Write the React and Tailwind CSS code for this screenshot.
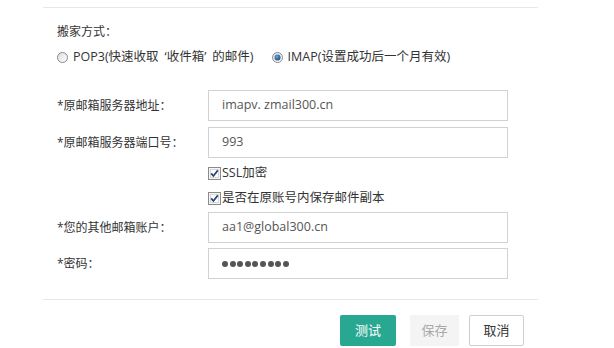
import React from 'react'

const font = { fontFamily: '"Open Sans", "Noto Sans CJK SC", sans-serif' }

function Radio({ checked }) {
  return (
    <svg width="11" height="11" viewBox="0 0 11 11" className="shrink-0">
      <defs>
        <linearGradient id={checked ? 'rg1' : 'rg0'} x1="0" y1="0" x2="1" y2="1">
          <stop offset="0" stopColor="#dcdcdc" />
          <stop offset="1" stopColor="#ffffff" />
        </linearGradient>
        <radialGradient id="rdot" cx="0.4" cy="0.35" r="0.75">
          <stop offset="0" stopColor="#6aa6dc" />
          <stop offset="1" stopColor="#173f73" />
        </radialGradient>
      </defs>
      <circle cx="5.5" cy="5.5" r="5" fill={`url(#${checked ? 'rg1' : 'rg0'})`} stroke="#8a8a8a" strokeWidth="1" />
      {checked && <circle cx="5.5" cy="5.5" r="3" fill="url(#rdot)" />}
    </svg>
  )
}

function Check() {
  return (
    <svg width="13" height="13" viewBox="0 0 13 13" className="shrink-0">
      <rect x="0.5" y="0.5" width="12" height="12" fill="#f6f6f6" stroke="#8a8a8a" />
      <rect x="2.5" y="2.5" width="8" height="8" fill="#ffffff" stroke="#d6d6d6" />
      <path d="M3.2 6.4 L5.4 9 L9.8 3.4" fill="none" stroke="#24447a" strokeWidth="1.7" />
    </svg>
  )
}

function Field({ label, children }) {
  return (
    <div className="flex items-center">
      <div className="w-[151px] text-[12px] text-[#333]">{label}</div>
      <div className="w-[300px] h-[31px] border border-[#d2d2d2] flex items-center pl-[13px] text-[12.5px] text-[#555]">
        {children}
      </div>
    </div>
  )
}

export default function App() {
  return (
    <div className="w-[614px] h-[348px] bg-white overflow-hidden pt-[7px]" style={font}>
      <div className="ml-[43px] w-[495px] border-t border-[#e8e8e8]">
        <div className="pl-[14px]">
          <div className="mt-[16px] h-[16px] leading-[16px] text-[12px] text-[#333]">搬家方式：</div>
          <div className="mt-[9px] h-[16px] flex items-center text-[12.5px] text-[#333]">
            <Radio />
            <span className="ml-[5px]">POP3(快速收取<span className="ml-[6px]">‘收件箱’</span><span className="ml-[6px]">的邮件)</span></span>
            <span className="ml-[18px]"><Radio checked /></span>
            <span className="ml-[5px]">IMAP(设置成功后一个月有效)</span>
          </div>

          <div className="mt-[25px]">
            <Field label="*原邮箱服务器地址：">imapv. zmail300.cn</Field>
          </div>
          <div className="mt-[6px]">
            <Field label="*原邮箱服务器端口号：">993</Field>
          </div>

          <div className="mt-[3px] pl-[151px] text-[12.5px] text-[#333]">
            <div className="h-[25px] flex items-center gap-[1px]">
              <Check />
              <span>SSL加密</span>
            </div>
            <div className="h-[25px] flex items-center gap-[1px]">
              <Check />
              <span>是否在原账号内保存邮件副本</span>
            </div>
          </div>

          <div className="mt-[1px]">
            <Field label="*您的其他邮箱账户：">aa1@global300.cn</Field>
          </div>
          <div className="mt-[5px]">
            <Field label="*密码：">
              <div className="flex gap-[1.6px]">
                {Array.from({ length: 9 }).map((_, i) => (
                  <span key={i} className="w-[6px] h-[6px] rounded-full bg-[#555]" />
                ))}
              </div>
            </Field>
          </div>
        </div>

        <div className="mt-[20px] border-t border-[#e8e8e8]" />

        <div className="mt-[15px] pr-[14px] flex justify-end text-[13px]">
          <button className="w-[56px] h-[31px] rounded-[2px] bg-[#29a891] text-white">测试</button>
          <button className="ml-[14px] w-[49px] h-[31px] bg-[#f4f4f4] text-[#a8a8a8]">保存</button>
          <button className="ml-[10px] w-[55px] h-[31px] rounded-[2px] border border-[#cfcfcf] bg-white text-[#333]">取消</button>
        </div>
      </div>
    </div>
  )
}
